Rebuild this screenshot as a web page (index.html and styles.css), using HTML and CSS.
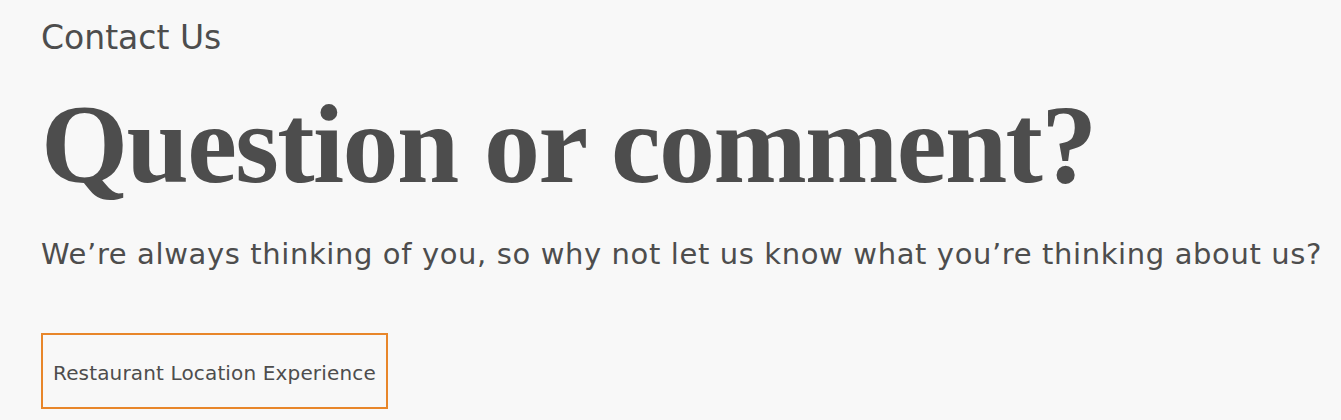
FILE: index.html
```html
<!DOCTYPE html>
<html lang="en">
<head>
<meta charset="utf-8">
<title>Contact Us</title>
<link rel="stylesheet" href="styles.css">
</head>
<body>
<main class="contact">
  <p class="eyebrow">Contact Us</p>
  <h1 class="title">Question or comment?</h1>
  <p class="lead">We’re always thinking of you, so why not let us know what you’re thinking about us?</p>
  <div class="tabs">
    <button class="tab" type="button">Restaurant Location Experience</button>
  </div>
</main>
</body>
</html>
```

FILE: styles.css
```css
html, body {
  margin: 0;
  padding: 0;
  background: #f8f8f8;
}
body {
  color: #4d4d4d;
  font-family: "DejaVu Sans", sans-serif;
}
.contact {
  padding: 18px 0 0 41px;
  display: flex;
  flex-direction: column;
  align-items: flex-start;
}
.eyebrow {
  margin: 0;
  font-family: "DejaVu Sans", sans-serif;
  font-size: 33px;
  line-height: 40px;
}
.title {
  margin: 30px 0 0 0;
  font-family: "Liberation Serif", serif;
  font-weight: bold;
  font-size: 112px;
  line-height: 112px;
  letter-spacing: -1.6px;
}
.lead {
  margin: 36px 0 0 0;
  font-size: 29px;
  line-height: 36px;
  letter-spacing: 0.62px;
}
.tabs {
  margin-top: 61px;
}
.tab {
  background: transparent;
  border: 2px solid #e8862a;
  color: #4d4d4d;
  font-family: "DejaVu Sans", sans-serif;
  font-size: 20px;
  letter-spacing: 0.15px;
  white-space: nowrap;
  padding: 3px 10px 0 10px;
  height: 76px;
  text-align: left;
}
```
